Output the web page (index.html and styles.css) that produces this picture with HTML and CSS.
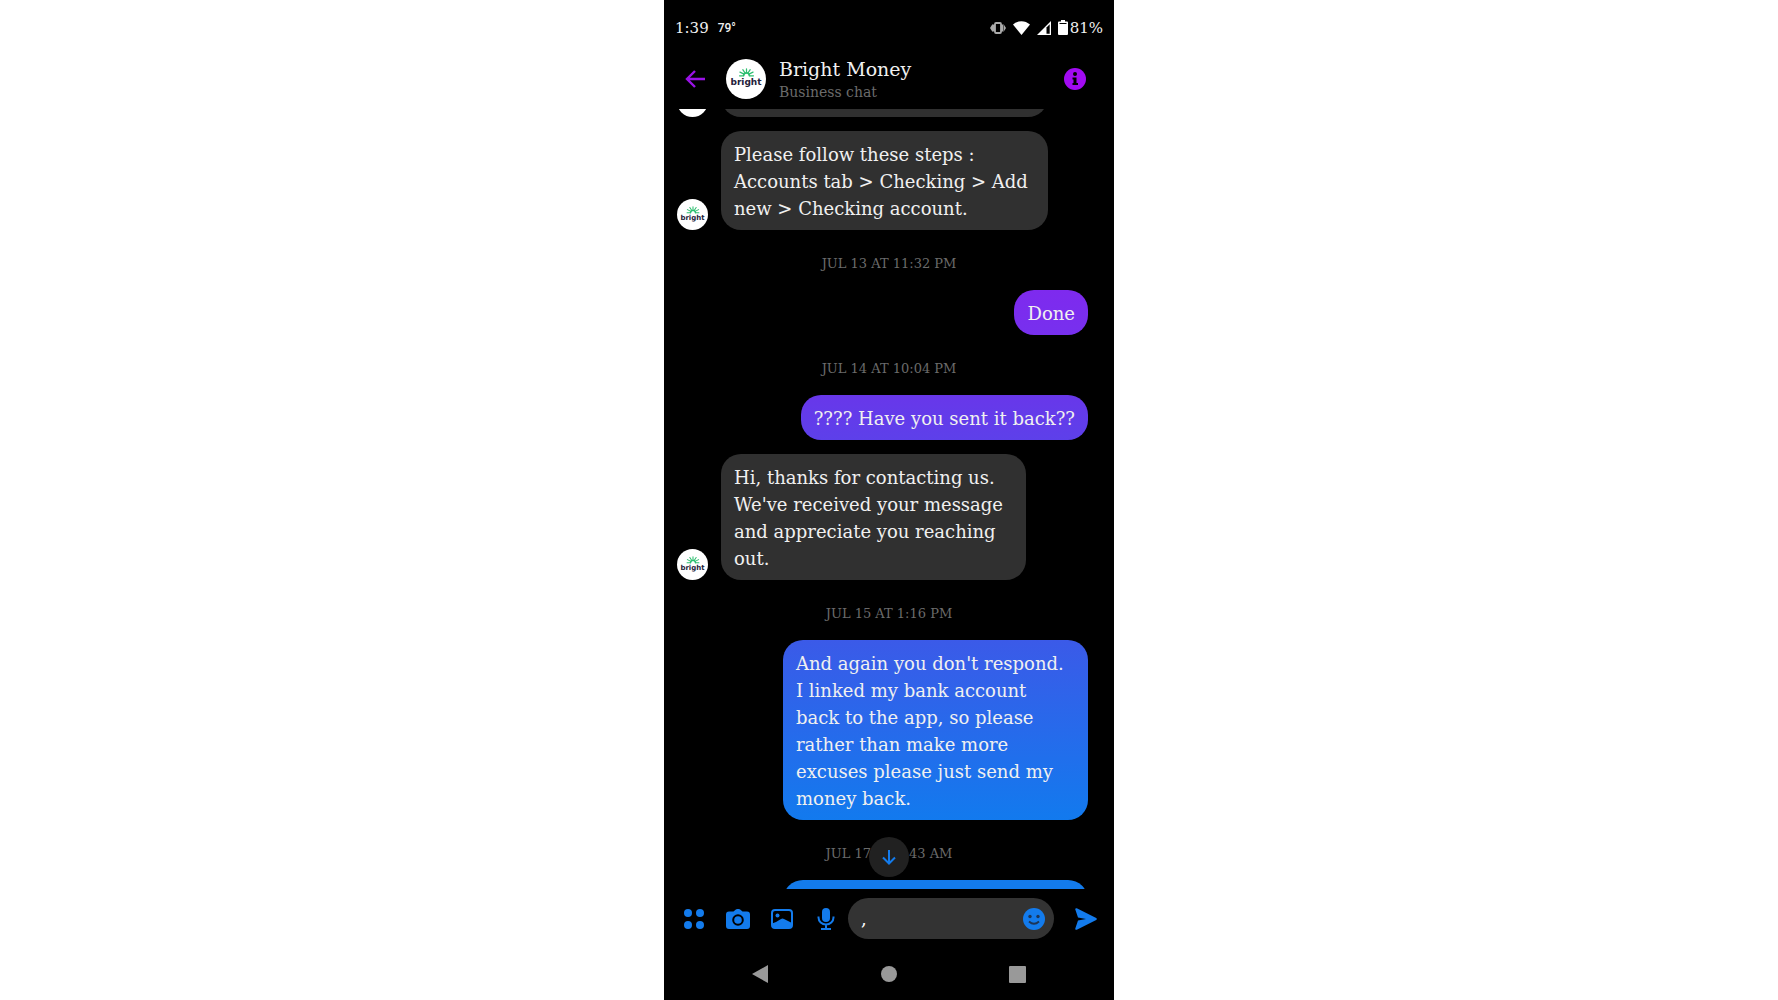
FILE: index.html
```html
<!DOCTYPE html>
<html lang="en">
<head>
  <meta charset="UTF-8">
  <meta name="viewport" content="width=device-width, initial-scale=1.0">
  <title>Bright Money</title>
  <link rel="stylesheet" href="styles.css">
</head>
<body>
  <!-- Shared logo -->
  <svg width="0" height="0" class="defs" aria-hidden="true">
    <symbol id="sun" viewBox="0 0 40 22">
      <g fill="none" stroke="#2fbf71" stroke-width="3" stroke-linecap="round">
        <path d="M3 19h9M28 19h9M4 10l10 5M36 10l-10 5M11 4l6 9M29 4l-6 9M20 2v10"/>
        <path d="M13 19a7 7 0 0 1 14 0" stroke-width="4"/>
      </g>
    </symbol>
  </svg>

  <div class="phone">
    <div class="status-bar">
      <span class="clock">1:39</span>
      <span class="temp">79°</span>
      <div class="status-icons">
        <svg width="16" height="14" viewBox="0 0 16 14"><path fill="#aaa" d="M0 7l2.500-4v8zM2 3.500h3v7H2zM16 7l-2.500-4v8zM11 3.500h3v7h-3z"/><rect x="5" y="2" width="6" height="10" rx="1" fill="#000" stroke="#aaa" stroke-width="1.800"/></svg>
        <svg width="17" height="14" viewBox="0 0 17 14"><path fill="#fff" d="M8.500 14L0 3.500C5-1 12-1 17 3.500z"/></svg>
        <svg width="14" height="14" viewBox="0 0 14 14"><path fill="#fff" d="M0 14L14 0v14z"/><path d="M9.500 6.500L12.700 3.300v9.400H9.500z"/></svg>
        <svg width="10" height="15" viewBox="0 0 10 15"><path fill="#fff" d="M3 0h4v1.500h2a1 1 0 0 1 1 1V14a1 1 0 0 1-1 1H1a1 1 0 0 1-1-1V2.500a1 1 0 0 1 1-1h2z"/><path d="M1.500 3h7v1h-7z"/></svg>
      </div>
      <span class="battery">81%</span>
    </div>

    <header class="header">
      <button class="icon-btn back" aria-label="Back">
        <svg width="20" height="18" viewBox="0 0 20 18"><path d="M20 9H2M10 1L2 9l8 8" fill="none" stroke="#9a12e6" stroke-width="2.400"/></svg>
      </button>
      <div class="avatar avatar-large">
        <svg class="sun"><use href="#sun"/></svg>
        <span>bright</span>
      </div>
      <div class="title">
        <h1>Bright Money</h1>
        <p>Business chat</p>
      </div>
      <button class="icon-btn info" aria-label="Info">
        <svg width="22" height="22" viewBox="0 0 22 22"><circle cx="11" cy="11" r="11" fill="#a20bf2"/><circle cx="11" cy="6" r="2"/><path d="M8.500 9.500h4V15H14v2H8.500v-2h1v-3.500h-1z"/></svg>
      </button>
    </header>

    <main class="chat">
      <div class="messages">
        <div class="row">
          <div class="avatar"></div>
          <div class="bubble wide clipped"></div>
        </div>
        <div class="row">
          <div class="avatar">
            <svg class="sun"><use href="#sun"/></svg>
            <span>bright</span>
          </div>
          <div class="bubble wide">Please follow these steps :<br>Accounts tab &gt; Checking &gt; Add<br>new &gt; Checking account.</div>
        </div>
        <div class="date">JUL 13 AT 11:32 PM</div>
        <div class="row sent"><div class="bubble violet">Done</div></div>
        <div class="date">JUL 14 AT 10:04 PM</div>
        <div class="row sent"><div class="bubble indigo">???? Have you sent it back??</div></div>
        <div class="row">
          <div class="avatar">
            <svg class="sun"><use href="#sun"/></svg>
            <span>bright</span>
          </div>
          <div class="bubble medium">Hi, thanks for contacting us.<br>We've received your message<br>and appreciate you reaching<br>out.</div>
        </div>
        <div class="date">JUL 15 AT 1:16 PM</div>
        <div class="row sent"><div class="bubble medium blue">And again you don't respond.<br>I linked my bank account<br>back to the app, so please<br>rather than make more<br>excuses please just send my<br>money back.</div></div>
        <div class="date split"><span>JUL 17</span><span>43 AM</span></div>
        <div class="row sent"><div class="bubble medium plain clipped"></div></div>
      </div>
      <button class="scroll-down" aria-label="Scroll to latest">
        <svg width="14" height="16" viewBox="0 0 14 16"><path d="M7 1v13M1 8.500l6 6 6-6" fill="none" stroke="#137bec" stroke-width="2"/></svg>
      </button>
    </main>

    <form class="composer">
      <button type="button" class="icon-btn" aria-label="More">
        <svg width="20" height="20" viewBox="0 0 20 20" fill="#137bec"><circle cx="4" cy="4" r="4"/><circle cx="16" cy="4" r="4"/><circle cx="4" cy="16" r="4"/><circle cx="16" cy="16" r="4"/></svg>
      </button>
      <button type="button" class="icon-btn" aria-label="Camera">
        <svg width="24" height="20" viewBox="0 0 24 20"><path fill="#137bec" d="M7.500 2.500L9.500.7Q10.300 0 11.300 0h1.400q1 0 1.800.7l2 1.800H21a3 3 0 0 1 3 3V17a3 3 0 0 1-3 3H3a3 3 0 0 1-3-3V5.500a3 3 0 0 1 3-3z"/><circle cx="12" cy="11" r="4.800" fill="none" stroke="#000" stroke-width="2"/></svg>
      </button>
      <button type="button" class="icon-btn" aria-label="Gallery">
        <svg width="22" height="20" viewBox="0 0 22 20"><rect x="1" y="1" width="20" height="18" rx="3" fill="none" stroke="#137bec" stroke-width="2"/><circle cx="6.500" cy="6.500" r="2" fill="#137bec"/><path fill="#137bec" d="M1 14.500L5 13l5-3q1.500-.8 3 0l8 4V17a2 2 0 0 1-2 2H3a2 2 0 0 1-2-2z"/></svg>
      </button>
      <button type="button" class="icon-btn" aria-label="Voice">
        <svg width="18" height="22" viewBox="0 0 18 22"><rect x="5" y="0" width="8" height="14" rx="4" fill="#137bec"/><path d="M1.500 8.500v1a7.500 7 0 0 0 15 0v-1M9 16.500V21M4 21h10" fill="none" stroke="#137bec" stroke-width="2"/></svg>
      </button>
      <div class="field">
        <input type="text" value="," aria-label="Message">
        <button type="button" class="icon-btn smile" aria-label="Emoji">
          <svg width="22" height="22" viewBox="0 0 22 22"><circle cx="11" cy="11" r="11" fill="#137bec"/><g fill="#1d3557"><circle cx="7" cy="8.500" r="1.700"/><circle cx="15" cy="8.500" r="1.700"/></g><path d="M6 13.500q5 4.500 10 0" fill="none" stroke="#1d3557" stroke-width="1.800"/></svg>
        </button>
      </div>
      <button type="submit" class="icon-btn send" aria-label="Send">
        <svg width="22" height="22" viewBox="0 0 22 22"><path fill="#137bec" d="M1.800.2L21.200 10q1.300 1 0 2L1.800 21.800Q0 22 .3 20.500L3 12.500 11 11 3 9.500.3 1.500Q0 0 1.800.2z"/></svg>
      </button>
    </form>

    <nav class="nav-bar">
      <button class="icon-btn" aria-label="Back"><svg width="16" height="18" viewBox="0 0 16 18"><path fill="#999" d="M16 0v18L0 9z"/></svg></button>
      <button class="icon-btn" aria-label="Home"><svg width="16" height="16" viewBox="0 0 16 16"><circle cx="8" cy="8" r="8" fill="#999"/></svg></button>
      <button class="icon-btn" aria-label="Recents"><svg width="17" height="17" viewBox="0 0 17 17"><rect width="17" height="17" rx="1" fill="#999"/></svg></button>
    </nav>
  </div>
</body>
</html>
```

FILE: styles.css
```css
* {
  box-sizing: border-box;
  margin: 0;
  padding: 0;
}

body {
  background: #ffffff;
  font-family: 'Roboto Slab', 'DejaVu Serif', serif;
  color: #f0f0f0;
}

.defs {
  position: absolute;
}

.phone {
  width: 100%;
  max-width: 450px;
  height: 100vh;
  margin: 0 auto;
  background: #000;
  display: flex;
  flex-direction: column;
}

.icon-btn {
  display: flex;
  align-items: center;
  justify-content: center;
  background: none;
  border: none;
  cursor: pointer;
}

/* Status bar */
.status-bar {
  display: flex;
  align-items: center;
  height: 48px;
  flex-shrink: 0;
  padding: 7px 11px 0 11px;
  font-size: 15px;
}

.temp {
  margin-left: 9px;
  font-family: Roboto, sans-serif;
  font-size: 12px;
  font-weight: 500;
}

.status-icons {
  display: flex;
  align-items: center;
  gap: 7px;
  margin-left: auto;
}

.battery {
  margin-left: 2px;
}

/* Header */
.header {
  display: flex;
  align-items: center;
  height: 61px;
  flex-shrink: 0;
  padding: 0 28px 0 21px;
}

.back {
  width: 20px;
  margin-right: 21px;
}

.title {
  flex: 1;
  margin-left: 13px;
}

.title h1 {
  font-size: 19px;
  line-height: 26px;
  font-weight: 400;
}

.title p {
  font-size: 14px;
  line-height: 20px;
  color: #6b6b6b;
}

.avatar {
  width: 31px;
  height: 31px;
  flex-shrink: 0;
  border-radius: 50%;
  background: #fff;
  color: #23203a;
  display: flex;
  flex-direction: column;
  align-items: center;
  padding-top: 7px;
  font: 700 7px/9px 'DejaVu Sans', sans-serif;
}

.sun {
  width: 14px;
  height: 8px;
}

.avatar-large {
  width: 40px;
  height: 40px;
  padding-top: 9px;
  font-size: 9px;
  line-height: 11px;
}

.avatar-large .sun {
  width: 17px;
  height: 9px;
}

/* Messages */
.chat {
  flex: 1;
  min-height: 0;
  overflow: hidden;
  position: relative;
}

/* the thread is scrolled part way through a message */
.messages {
  margin-top: -37px;
}

.row {
  display: flex;
  align-items: flex-end;
  gap: 13px;
  padding: 0 26px 0 13px;
}

.row + .row {
  margin-top: 14px;
}

.sent {
  justify-content: flex-end;
}

.bubble {
  padding: 10px 13px 8px;
  border-radius: 20px;
  background: #303030;
  font-size: 18px;
  line-height: 27px;
  white-space: nowrap;
}

.wide {
  width: 327px;
}

.medium {
  width: 305px;
}

.clipped {
  height: 45px;
}

.violet {
  background: linear-gradient(#7e2aee, #7730ee);
}

.indigo {
  background: linear-gradient(#6837ea, #5d40ea);
}

.blue {
  background: linear-gradient(#3b5ae8, #127aee);
}

.plain {
  background: #137bec;
}

.date {
  padding: 25px 0 17px;
  font-size: 13px;
  line-height: 18px;
  text-align: center;
  color: #6b6b6b;
}

.split {
  display: flex;
  justify-content: center;
  gap: 38px;
}

.scroll-down {
  position: absolute;
  left: 50%;
  bottom: 12px;
  width: 40px;
  height: 40px;
  margin-left: -20px;
  border: none;
  border-radius: 50%;
  background: #212121;
  display: flex;
  align-items: center;
  justify-content: center;
}

/* Composer */
.composer {
  display: flex;
  align-items: center;
  height: 59px;
  flex-shrink: 0;
  gap: 20px;
  padding: 0 16px 0 18px;
}

.composer > .icon-btn {
  width: 24px;
  height: 24px;
}

.field {
  flex: 1;
  min-width: 0;
  display: flex;
  align-items: center;
  height: 41px;
  margin-left: -10px;
  padding: 0 9px 0 13px;
  border-radius: 21px;
  background: #333;
}

.field input {
  flex: 1;
  min-width: 0;
  background: none;
  border: none;
  outline: none;
  color: #fff;
  font: inherit;
  font-size: 18px;
}

/* System navigation */
.nav-bar {
  display: flex;
  align-items: center;
  justify-content: space-between;
  height: 52px;
  flex-shrink: 0;
  padding: 0 88px;
}
```
